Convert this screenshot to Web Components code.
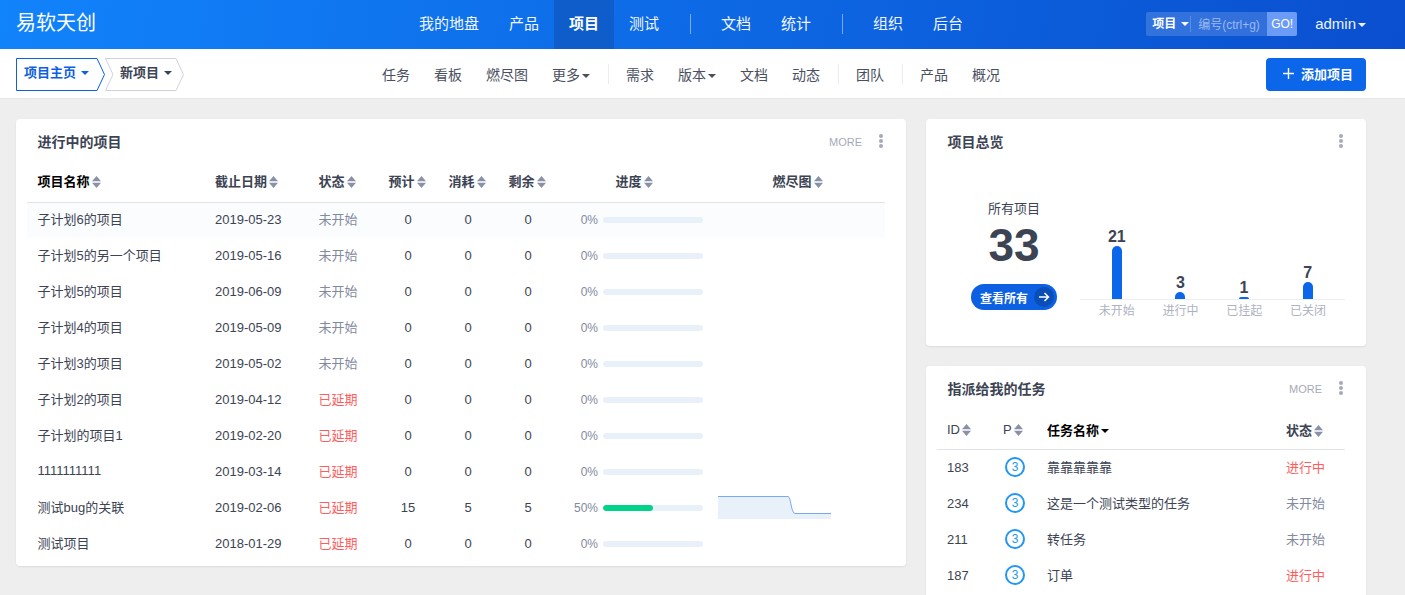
<!DOCTYPE html>
<html lang="zh">
<head>
<meta charset="utf-8">
<title>易软天创</title>
<style>
    html, body {
        margin: 0;
        height: 595px;
        overflow: hidden;
        background: #eeeeee;
        font-family: "Liberation Sans", "Noto Sans CJK SC", sans-serif;
        font-size: 13px;
        color: #3c4353;
    }
</style>
</head>
<body>
<top-header></top-header>
<sub-nav></sub-nav>
<dash-board>
    <project-card slot="main"></project-card>
    <overview-card slot="side"></overview-card>
    <task-card slot="side"></task-card>
</dash-board>

<script>
const FONT = '"Liberation Sans", "Noto Sans CJK SC", sans-serif';

class SortCaret extends HTMLElement {
    constructor () {
        super();
        this.attachShadow({ mode: 'open' });
    }

    connectedCallback () {
        this.shadowRoot.innerHTML = `
        <style>
            :host { display: inline-block; width: 9px; height: 12px; margin-left: 2px; vertical-align: -2px; }
            svg { display: block; }
        </style>
        <svg width="9" height="12" viewBox="0 0 9 12"><path d="M4.5 0 9 5.2H0zM4.5 12 0 6.8h9z" fill="#8a90a5"/></svg>
        `;
    }
}

class DownCaret extends HTMLElement {
    constructor () {
        super();
        this.attachShadow({ mode: 'open' });
    }

    connectedCallback () {
        const size = this.getAttribute('size') || 8;
        this.shadowRoot.innerHTML = `
        <style>
            :host { display: inline-block; margin-left: var(--caret-gap, 2px); vertical-align: 2px; line-height: 0; }
        </style>
        <svg width="${size}" height="${size / 2}" viewBox="0 0 8 4"><path d="M0 0h8L4 4z" fill="currentColor"/></svg>
        `;
    }
}

class CardHead extends HTMLElement {
    constructor () {
        super();
        this.attachShadow({ mode: 'open' });
    }

    connectedCallback () {
        const more = this.hasAttribute('more') ? '<span class="more">MORE</span>' : '';
        this.shadowRoot.innerHTML = `
        <style>
            :host { display: flex; align-items: center; height: 46px; padding: 0 22px 0 21.5px; font-family: ${FONT}; }
            .title { flex: 1; font-size: 14px; font-weight: bold; color: #3c4353; margin-top: -2px; }
            .more { font-size: 11px; color: #a6aab8; margin-right: 16px; }
            svg { display: block; margin-top: -3px; }
        </style>
        <span class="title"><slot></slot></span>
        ${more}
        <svg width="6" height="16" viewBox="0 0 6 16" fill="#a6aab8"><circle cx="3" cy="3" r="2"/><circle cx="3" cy="8" r="2"/><circle cx="3" cy="13" r="2"/></svg>
        `;
    }
}

class TopHeader extends HTMLElement {
    constructor () {
        super();
        this.attachShadow({ mode: 'open' });
    }

    connectedCallback () {
        this.shadowRoot.innerHTML = `
        <style>
            :host {
                display: flex;
                align-items: stretch;
                height: 49px;
                background: linear-gradient(100deg, #1183fb 0%, #0a4fcf 100%);
                color: #fff;
                font-family: ${FONT};
            }
            .logo { width: 388px; padding-left: 16px; font-size: 20px; line-height: 46px; }
            nav { display: flex; flex: 1; font-size: 15px; line-height: 47px; }
            nav a { padding: 0 15px; color: #f2f6ff; }
            nav a.active { background: #0f5ccb; color: #fff; font-weight: bold; }
            nav i { width: 1px; height: 20px; margin: 14px 15px 0 16px; background: rgba(255, 255, 255, .45); }
            .search {
                display: flex;
                align-self: center;
                align-items: center;
                width: 151px;
                height: 24px;
                margin-top: -2px;
                background: rgba(255, 255, 255, .16);
                border-radius: 2px;
                font-size: 12px;
            }
            .type { width: 45px; padding-left: 6px; box-sizing: border-box; font-weight: bold; border-right: 1px solid rgba(255, 255, 255, .2); line-height: 16px; --caret-gap: 5px; }
            .ph { flex: 1; padding-left: 7px; color: #9db8f0; white-space: nowrap; }
            .go { width: 30px; height: 24px; line-height: 24px; text-align: center; background: #6a9bf6; border-radius: 0 2px 2px 0; }
            .user { margin: 0 39px 0 18px; font-size: 15px; line-height: 47px; color: #eef3ff; --caret-gap: 2px; }
        </style>
        <div class="logo">易软天创</div>
        <nav>
            <a>我的地盘</a><a>产品</a><a class="active">项目</a><a>测试</a><i></i>
            <a>文档</a><a>统计</a><i></i>
            <a>组织</a><a>后台</a>
        </nav>
        <div class="search">
            <span class="type">项目<down-caret></down-caret></span>
            <span class="ph">编号(ctrl+g)</span>
            <span class="go">GO!</span>
        </div>
        <div class="user">admin<down-caret></down-caret></div>
        `;
    }
}

class CrumbItem extends HTMLElement {
    constructor () {
        super();
        this.attachShadow({ mode: 'open' });
    }

    connectedCallback () {
        const active = this.hasAttribute('active');
        const width = Number(this.getAttribute('width'));
        const stroke = active ? '#0c60e1' : '#cfd2e0';
        const notch = active ? '' : `L8 16.5`;
        this.shadowRoot.innerHTML = `
        <style>
            :host {
                display: block;
                position: relative;
                width: ${width}px;
                height: 33px;
                box-sizing: border-box;
                padding-left: ${active ? 8 : 15}px;
                line-height: 30px;
                font-size: 13px;
                font-weight: bold;
                color: ${active ? '#0c60e1' : '#3c4353'};
                --caret-gap: 5px;
            }
            svg { position: absolute; left: 0; top: 0; }
            span { position: relative; }
        </style>
        <svg width="${width}" height="33"><path d="M.5 .5H${width - 8}L${width - .5} 16.5 ${width - 8} 32.5H.5${notch}Z" fill="#fff" stroke="${stroke}"/></svg>
        <span><slot></slot><down-caret></down-caret></span>
        `;
    }
}

class SubNav extends HTMLElement {
    constructor () {
        super();
        this.attachShadow({ mode: 'open' });
    }

    connectedCallback () {
        this.shadowRoot.innerHTML = `
        <style>
            :host {
                display: flex;
                align-items: center;
                height: 50px;
                padding: 0 39px 0 16px;
                box-sizing: border-box;
                background: #fff;
                border-bottom: 1px solid #e8e8ec;
                font-family: ${FONT};
            }
            .crumbs { display: flex; width: 354px; margin-top: 2px; }
            nav { display: flex; align-items: center; flex: 1; font-size: 14px; color: #4a5060; }
            nav a { padding: 0 12px; --caret-gap: 2px; }
            nav i { width: 1px; height: 20px; margin: 0 5px 0 6px; background: #ececf0; }
            .add {
                width: 100px;
                height: 33px;
                margin-top: 2px;
                background: #0c66ea;
                border-radius: 4px;
                color: #fff;
                font-size: 13px;
                font-weight: bold;
                display: flex;
                align-items: center;
                padding-left: 17px;
                box-sizing: border-box;
                gap: 7px;
            }
            .add svg { margin-top: -2px; }
            .add span { margin-top: -3px; }
        </style>
        <div class="crumbs">
            <crumb-item active width="89">项目主页</crumb-item>
            <crumb-item width="79">新项目</crumb-item>
        </div>
        <nav>
            <a>任务</a><a>看板</a><a>燃尽图</a><a>更多<down-caret></down-caret></a><i></i>
            <a>需求</a><a>版本<down-caret></down-caret></a><a>文档</a><a>动态</a><i></i>
            <a>团队</a><i></i>
            <a>产品</a><a>概况</a>
        </nav>
        <div class="add">
            <svg width="11" height="11" viewBox="0 0 11 11"><path d="M5.5 0v11M0 5.5h11" stroke="#fff" stroke-width="1.4"/></svg>
            <span>添加项目</span>
        </div>
        `;
    }
}

class DashBoard extends HTMLElement {
    constructor () {
        super();
        this.attachShadow({ mode: 'open' });
    }

    connectedCallback () {
        this.shadowRoot.innerHTML = `
        <style>
            :host {
                display: grid;
                grid-template-columns: 890px 440px;
                column-gap: 20px;
                align-items: start;
                padding: 20px 39px 0 16px;
            }
            .side { display: flex; flex-direction: column; gap: 20px; }
        </style>
        <div><slot name="main"></slot></div>
        <div class="side"><slot name="side"></slot></div>
        `;
    }
}

const CARD_STYLE = `
    :host {
        display: block;
        background: #fff;
        border-radius: 4px;
        box-shadow: 0 1px 2px rgba(0, 0, 0, .08);
        font-family: ${FONT};
        font-size: 13px;
        color: #3c4353;
    }
`;

class ProgressBar extends HTMLElement {
    constructor () {
        super();
        this.attachShadow({ mode: 'open' });
    }

    connectedCallback () {
        const value = Number(this.getAttribute('value'));
        this.shadowRoot.innerHTML = `
        <style>
            :host { display: flex; align-items: center; justify-content: flex-end; gap: 5px; width: 145px; }
            span { font-size: 12px; color: #838a9d; }
            .track { width: 100px; height: 6px; border-radius: 3px; background: #e8f1fa; overflow: hidden; }
            .fill { height: 100%; border-radius: 3px; background: #00d488; width: ${value}%; }
        </style>
        <span>${value}%</span>
        <div class="track"><div class="fill"></div></div>
        `;
    }
}

class BurnChart extends HTMLElement {
    constructor () {
        super();
        this.attachShadow({ mode: 'open' });
    }

    connectedCallback () {
        this.shadowRoot.innerHTML = `
        <style>
            :host { display: block; line-height: 0; margin-top: -1px; }
        </style>
        <svg width="113" height="23" viewBox="0 0 113 23">
            <path d="M0 .5H70C73 .5 73 17.5 77 17.5H113V23H0Z" fill="#e8f1fa"/>
            <path d="M0 .5H70C73 .5 73 17.5 77 17.5H113" fill="none" stroke="#7ba9f0"/>
        </svg>
        `;
    }
}

class ProjectCard extends HTMLElement {
    constructor () {
        super();
        this.attachShadow({ mode: 'open' });

        this.projects = [
            ['子计划6的项目', '2019-05-23', 0, 0, 0, 0, 0],
            ['子计划5的另一个项目', '2019-05-16', 0, 0, 0, 0, 0],
            ['子计划5的项目', '2019-06-09', 0, 0, 0, 0, 0],
            ['子计划4的项目', '2019-05-09', 0, 0, 0, 0, 0],
            ['子计划3的项目', '2019-05-02', 0, 0, 0, 0, 0],
            ['子计划2的项目', '2019-04-12', 1, 0, 0, 0, 0],
            ['子计划的项目1', '2019-02-20', 1, 0, 0, 0, 0],
            ['1111111111', '2019-03-14', 1, 0, 0, 0, 0],
            ['测试bug的关联', '2019-02-06', 1, 15, 5, 5, 50],
            ['测试项目', '2018-01-29', 1, 0, 0, 0, 0],
        ];
    }

    connectedCallback () {
        const rows = this.projects.map((p, i) => `
            <tr class="${i === 0 ? 'hover' : ''}">
                <td class="l cjk first">${p[0]}</td>
                <td class="l txt">${p[1]}</td>
                <td class="l cjk st ${p[2] ? 'late' : 'wait'}">${p[2] ? '已延期' : '未开始'}</td>
                <td class="txt">${p[3]}</td>
                <td class="txt">${p[4]}</td>
                <td class="txt">${p[5]}</td>
                <td><progress-bar value="${p[6]}"></progress-bar></td>
                <td class="burn">${p[6] ? '<burn-chart></burn-chart>' : ''}</td>
            </tr>`).join('');

        this.shadowRoot.innerHTML = `
        <style>
            ${CARD_STYLE}
            :host { height: 447px; }
            .wrap { padding: 0 21px 0 11px; }
            table { width: 858px; table-layout: fixed; border-collapse: collapse; }
            th, td { box-sizing: border-box; }
            th { height: 37px; padding: 0 0 6px; font-size: 13px; border-bottom: 1px solid #e3e4e8; color: #3c4353; text-align: center; }
            th:first-child { color: #000; }
            th.left { padding-right: 2px; }
            th.right { padding-left: 2px; }
            td { height: 36px; padding: 0; text-align: center; }
            .l { text-align: left; padding-left: 11px; }
            .first { padding-left: 10.5px; }
            .st { padding-left: 10.5px; }
            .cjk { padding-bottom: 4px; }
            .txt { padding-bottom: 2px; }
            .hover td { background: #fafcfe; }
            .wait { color: #838a9d; }
            .late { color: #ff5d5d; }
            .burn { padding-left: 10px; text-align: left; }
        </style>
        <card-head more>进行中的项目</card-head>
        <div class="wrap">
            <table>
                <colgroup><col width="177"><col width="104"><col width="70"><col width="60"><col width="60"><col width="60"><col width="150"><col width="177"></colgroup>
                <thead><tr>
                    <th class="l first">项目名称<sort-caret></sort-caret></th>
                    <th class="l">截止日期<sort-caret></sort-caret></th>
                    <th class="l st">状态<sort-caret></sort-caret></th>
                    <th class="left">预计<sort-caret></sort-caret></th>
                    <th class="left">消耗<sort-caret></sort-caret></th>
                    <th class="left">剩余<sort-caret></sort-caret></th>
                    <th class="right">进度<sort-caret></sort-caret></th>
                    <th class="right">燃尽图<sort-caret></sort-caret></th>
                </tr></thead>
                <tbody>${rows}</tbody>
            </table>
        </div>
        `;
    }
}

class OverviewCard extends HTMLElement {
    constructor () {
        super();
        this.attachShadow({ mode: 'open' });

        this.bars = [
            { label: '未开始', value: 21, height: 53 },
            { label: '进行中', value: 3, height: 7 },
            { label: '已挂起', value: 1, height: 2 },
            { label: '已关闭', value: 7, height: 17 },
        ];
    }

    connectedCallback () {
        const cols = this.bars.map((b) => `
            <div class="col">
                <b>${b.value}</b>
                <i style="height:${b.height}px"></i>
            </div>`).join('');
        const labels = this.bars.map((b) => `<span>${b.label}</span>`).join('');

        this.shadowRoot.innerHTML = `
        <style>
            ${CARD_STYLE}
            :host { height: 227px; }
            .body { display: flex; padding: 26px 21px 0 45px; }
            .total { width: 86px; margin-right: 23px; text-align: center; }
            .all { margin-top: 9px; line-height: 18px; }
            .num { font-size: 46px; font-weight: bold; line-height: 52px; margin-top: 1px; }
            .btn {
                display: flex;
                align-items: center;
                height: 26px;
                margin-top: 13px;
                padding: 0 3px 0 9px;
                border-radius: 13px;
                background: #0c60e1;
                color: #fff;
                font-size: 12px;
                font-weight: bold;
            }
            .btn span { flex: 1; text-align: left; }
            .btn em { display: flex; align-items: center; justify-content: center; width: 20px; height: 20px; border-radius: 50%; background: #0a4fb8; }
            .chart { width: 265px; }
            .bars { display: flex; align-items: flex-end; height: 108px; padding: 0 5.5px 0 5px; border-bottom: 1px solid #eceef2; }
            .col { flex: 1; display: flex; flex-direction: column; align-items: center; }
            .col b { font-size: 16px; line-height: 18px; }
            .col i { display: block; width: 10px; border-radius: 5px 5px 0 0; background: #0c66ea; }
            .labels { display: flex; padding: 0 5px; margin-top: 2px; font-size: 12px; line-height: 18px; color: #aeb2bf; }
            .labels span { flex: 1; text-align: center; }
        </style>
        <card-head>项目总览</card-head>
        <div class="body">
            <div class="total">
                <div class="all">所有项目</div>
                <div class="num">33</div>
                <div class="btn">
                    <span>查看所有</span>
                    <em><svg width="12" height="12" viewBox="0 0 12 12" fill="none" stroke="#fff" stroke-width="1.5"><path d="M1 6h9.5M6.5 2l4 4-4 4"/></svg></em>
                </div>
            </div>
            <div class="chart">
                <div class="bars">${cols}</div>
                <div class="labels">${labels}</div>
            </div>
        </div>
        `;
    }
}

class TaskCard extends HTMLElement {
    constructor () {
        super();
        this.attachShadow({ mode: 'open' });

        this.tasks = [
            [183, '靠靠靠靠靠', '进行中'],
            [234, '这是一个测试类型的任务', '未开始'],
            [211, '转任务', '未开始'],
            [187, '订单', '进行中'],
        ];
    }

    connectedCallback () {
        const rows = this.tasks.map((t) => `
            <tr>
                <td class="id">${t[0]}</td>
                <td><span class="pri">3</span></td>
                <td class="cjk">${t[1]}</td>
                <td class="cjk ${t[2] === '进行中' ? 'late' : 'wait'}">${t[2]}</td>
            </tr>`).join('');

        this.shadowRoot.innerHTML = `
        <style>
            ${CARD_STYLE}
            :host { height: 229px; border-radius: 4px 4px 0 0; }
            .wrap { padding: 0 21px 0 11px; }
            table { width: 408px; table-layout: fixed; border-collapse: collapse; }
            th, td { box-sizing: border-box; }
            th { height: 37px; padding: 0 0 2px 10px; font-size: 13px; text-align: left; border-bottom: 1px solid #e3e4e8; }
            th.plain { font-weight: normal; }
            th.on { color: #000; --caret-gap: 2px; }
            td { height: 36px; padding: 0 0 0 10px; }
            .cjk { padding-bottom: 2px; }
            .pri {
                display: block;
                width: 16px;
                height: 16px;
                margin-left: 2px;
                border: 2px solid #2196f3;
                border-radius: 50%;
                text-align: center;
                line-height: 16px;
                font-size: 12px;
                color: #2196f3;
            }
            .wait { color: #838a9d; }
            .late { color: #ff5d5d; }
        </style>
        <card-head more>指派给我的任务</card-head>
        <div class="wrap">
            <table>
                <colgroup><col width="56"><col width="44"><col width="239"><col width="69"></colgroup>
                <thead><tr>
                    <th class="plain">ID<sort-caret></sort-caret></th>
                    <th class="plain">P<sort-caret></sort-caret></th>
                    <th class="on">任务名称<down-caret></down-caret></th>
                    <th>状态<sort-caret></sort-caret></th>
                </tr></thead>
                <tbody>${rows}</tbody>
            </table>
        </div>
        `;
    }
}

customElements.define('sort-caret', SortCaret);
customElements.define('down-caret', DownCaret);
customElements.define('card-head', CardHead);
customElements.define('top-header', TopHeader);
customElements.define('crumb-item', CrumbItem);
customElements.define('sub-nav', SubNav);
customElements.define('dash-board', DashBoard);
customElements.define('progress-bar', ProgressBar);
customElements.define('burn-chart', BurnChart);
customElements.define('project-card', ProjectCard);
customElements.define('overview-card', OverviewCard);
customElements.define('task-card', TaskCard);
</script>
</body>
</html>
